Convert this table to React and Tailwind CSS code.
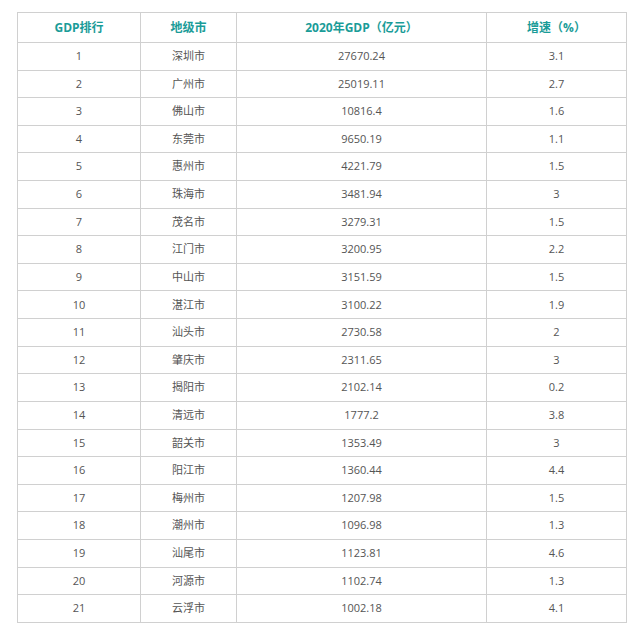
import React from "react";

const rows = [
  ["1", "深圳市", "27670.24", "3.1"],
  ["2", "广州市", "25019.11", "2.7"],
  ["3", "佛山市", "10816.4", "1.6"],
  ["4", "东莞市", "9650.19", "1.1"],
  ["5", "惠州市", "4221.79", "1.5"],
  ["6", "珠海市", "3481.94", "3"],
  ["7", "茂名市", "3279.31", "1.5"],
  ["8", "江门市", "3200.95", "2.2"],
  ["9", "中山市", "3151.59", "1.5"],
  ["10", "湛江市", "3100.22", "1.9"],
  ["11", "汕头市", "2730.58", "2"],
  ["12", "肇庆市", "2311.65", "3"],
  ["13", "揭阳市", "2102.14", "0.2"],
  ["14", "清远市", "1777.2", "3.8"],
  ["15", "韶关市", "1353.49", "3"],
  ["16", "阳江市", "1360.44", "4.4"],
  ["17", "梅州市", "1207.98", "1.5"],
  ["18", "潮州市", "1096.98", "1.3"],
  ["19", "汕尾市", "1123.81", "4.6"],
  ["20", "河源市", "1102.74", "1.3"],
  ["21", "云浮市", "1002.18", "4.1"],
];

const headers = ["GDP排行", "地级市", "2020年GDP（亿元）", "增速（%）"];

const font = { fontFamily: '"Open Sans", "Noto Sans CJK SC", sans-serif' };

export default function App() {
  return (
    <div className="w-[640px] h-[639px] bg-white pt-[12px] pl-[17px]" style={font}>
      <div className="w-[610px] border-l border-t border-[#d0d0d0] grid grid-cols-[123px_96px_250px_140px]">
        {headers.map((h) => (
          <div
            key={h}
            className="h-[30px] flex items-center justify-center border-r border-b border-[#d0d0d0] text-[12px] font-bold text-[#1a9c98]"
          >
            {h}
          </div>
        ))}
        {rows.map((r) =>
          r.map((c, i) => (
            <div
              key={r[0] + "-" + i}
              className="h-[27.62px] flex items-center justify-center border-r border-b border-[#d0d0d0] text-[11px] text-[#555555]"
            >
              {c}
            </div>
          ))
        )}
      </div>
    </div>
  );
}
